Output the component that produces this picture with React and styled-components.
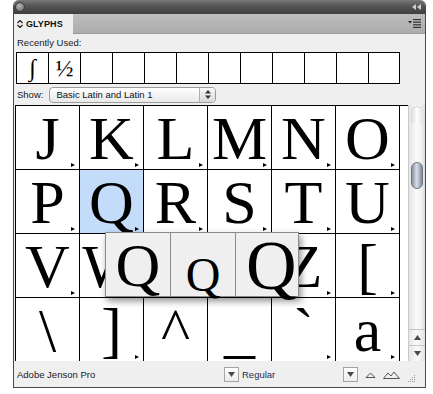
import React from "react";
import styled, { createGlobalStyle, css } from "styled-components";

const Global = createGlobalStyle`
  html, body { margin: 0; padding: 0; background: #ffffff; }
  body { font-family: "Liberation Sans", Arial, sans-serif; }
`;

const Page = styled.div`
  width: 433px;
  height: 394px;
  padding-left: 13px;
  box-sizing: border-box;
  background: #fff;
`;

const Panel = styled.div`
  width: 413px;
  height: 388px;
  box-sizing: border-box;
  border: 1px solid #4a4a4a;
  border-top: none;
  border-radius: 6px 6px 0 0;
  overflow: hidden;
  background: #efefef;
  display: flex;
  flex-direction: column;
`;

const TitleBar = styled.div`
  height: 14px;
  flex: none;
  background: linear-gradient(#7a7a7a, #565656 40%, #3e3e3e);
  display: flex;
  align-items: center;
  justify-content: space-between;
  padding: 0 4px 0 1px;
`;

const CloseDot = styled.div`
  width: 8px;
  height: 8px;
  border-radius: 50%;
  background: radial-gradient(circle at 40% 35%, #b5b5b5, #7d7d7d 70%);
  border: 1px solid #3a3a3a;
`;

const TabRow = styled.div`
  height: 20px;
  flex: none;
  display: flex;
  align-items: stretch;
  justify-content: space-between;
  background: linear-gradient(#bdbdbd, #acacac);
  border-bottom: 1px solid #9a9a9a;
  box-sizing: border-box;
`;

const Tab = styled.div`
  width: 59px;
  background: #efefef;
  margin-bottom: -1px;
  display: flex;
  align-items: center;
  padding-left: 3px;
  gap: 3px;
  box-sizing: border-box;
  font: bold 9px "Liberation Sans", Arial, sans-serif;
  color: #111;
  letter-spacing: 0.1px;
`;

const MenuBtn = styled.div`
  display: flex;
  align-items: center;
  padding-right: 4px;
`;

const Label = styled.div`
  font: 9.5px "Liberation Sans", Arial, sans-serif;
  color: #1a1a1a;
`;

const RecentLabel = styled(Label)`
  height: 18px;
  line-height: 18px;
  padding-left: 3px;
`;

const RecentRow = styled.div`
  display: flex;
  margin-left: 2px;
`;

const RecentCell = styled.div`
  width: 32px;
  height: 32px;
  box-sizing: border-box;
  border: 1px solid #000;
  border-right: none;
  background: #fff;
  display: flex;
  align-items: center;
  justify-content: center;
  font-family: "Liberation Serif", "DejaVu Serif", serif;
  font-size: ${(p) => p.$size || 22}px;
  color: #000;
  &:last-child { border-right: 1px solid #000; }
`;

const ShowRow = styled.div`
  height: 25px;
  display: flex;
  align-items: center;
  padding-left: 3px;
  gap: 6px;
`;

const Select = styled.div`
  width: 167px;
  height: 16px;
  box-sizing: border-box;
  border: 1px solid #9c9c9c;
  border-radius: 4px;
  background: linear-gradient(#ffffff, #f4f4f4 50%, #e9e9e9);
  display: flex;
  align-items: center;
  justify-content: space-between;
  padding-left: 6px;
  font: 9.5px "Liberation Sans", Arial, sans-serif;
  color: #111;
  overflow: hidden;
`;

const Stepper = styled.div`
  width: 15px;
  height: 14px;
  border-left: 1px solid #b0b0b0;
  background: linear-gradient(#f8f8f8, #d8d8d8);
  display: flex;
  align-items: center;
  justify-content: center;
`;

const GridArea = styled.div`
  position: relative;
  margin-left: 1px;
  height: 256px;
  display: flex;
  flex: none;
`;

const Grid = styled.div`
  width: 393px;
  height: 256px;
  box-sizing: border-box;
  border-top: 1px solid #000;
  border-left: 1px solid #000;
  background: #fff;
  display: grid;
  grid-template-columns: repeat(6, 64px);
  grid-auto-rows: 64px;
  overflow: hidden;
`;

const Cell = styled.div`
  position: relative;
  box-sizing: border-box;
  border-right: 1px solid #000;
  border-bottom: 1px solid #000;
  background: ${(p) => (p.$selected ? "#c3dcfa" : "#fff")};
  text-align: center;
  font-family: "Liberation Serif", "DejaVu Serif", serif;
  font-size: 62px;
  line-height: 64px;
  color: #000;
  overflow: hidden;
  ${(p) =>
    p.$mark &&
    css`
      &::after {
        content: "";
        position: absolute;
        right: 4px;
        bottom: 2px;
        border-left: 4px solid #000;
        border-top: 2.5px solid transparent;
        border-bottom: 2.5px solid transparent;
      }
    `}
`;

const Popup = styled.div`
  position: absolute;
  left: 90px;
  top: 127px;
  height: 65px;
  display: flex;
  background: #efefef;
  border: 1px solid #8a8a8a;
  box-sizing: border-box;
  box-shadow: 2px 4px 7px rgba(0, 0, 0, 0.45);
`;

const PopCell = styled.div`
  width: ${(p) => p.$w}px;
  height: 63px;
  box-sizing: border-box;
  border-right: ${(p) => (p.$last ? "none" : "1px solid #8a8a8a")};
  text-align: ${(p) => (p.$last ? "left" : "center")};
  padding-left: ${(p) => (p.$last ? 10 : 0)}px;
  font-family: "Liberation Serif", "DejaVu Serif", serif;
  font-size: ${(p) => p.$size}px;
  line-height: ${(p) => p.$lh}px;
  color: #000;
  overflow: visible;
  white-space: nowrap;
`;

const Scrollbar = styled.div`
  width: 17px;
  height: 256px;
  box-sizing: border-box;
  border-left: 1px solid #c9c9c9;
  background: linear-gradient(90deg, #e4e4e4, #fafafa 45%, #f2f2f2 75%, #dcdcdc);
  display: flex;
  flex-direction: column;
`;

const TrackCap = styled.div`
  height: 16px;
  margin: 1px 2px 0;
  border-radius: 7px 7px 0 0;
  background: linear-gradient(90deg, #d8d8d8, #ffffff 50%, #e0e0e0);
  border-top: 1px solid #cfcfcf;
`;

const Thumb = styled.div`
  margin: 39px 2px 0;
  height: 25px;
  border-radius: 7px;
  border: 1px solid #6f7680;
  background: linear-gradient(90deg, #8892a0, #d4dbe6 45%, #b4bfcc 70%, #7c8693);
`;

const Spacer = styled.div`
  flex: 1;
`;

const ArrowBtn = styled.div`
  height: 15px;
  border-top: 1px solid #c4c4c4;
  display: flex;
  align-items: center;
  justify-content: center;
  background: linear-gradient(90deg, #e6e6e6, #fbfbfb 50%, #e2e2e2);
`;

const BottomBar = styled.div`
  flex: 1;
  display: flex;
  align-items: center;
  padding-left: 3px;
  background: #efefef;
`;

const FontName = styled(Label)`
  width: 207px;
`;

const DropBtn = styled.div`
  width: 15px;
  height: 15px;
  box-sizing: border-box;
  border: 1px solid #a5a5a5;
  background: linear-gradient(#ffffff, #ececec);
  display: flex;
  align-items: center;
  justify-content: center;
`;

const StyleName = styled(Label)`
  width: 104px;
  padding-left: 3px;
  box-sizing: border-box;
  color: #1d2a55;
`;

const IconGroup = styled.div`
  display: flex;
  align-items: center;
  gap: 7px;
  margin-left: 7px;
  margin-top: 2px;
`;

const Grip = styled.div`
  margin-left: 7px;
  margin-top: 8px;
`;

const Tri = ({ up }) => (
  <svg width="7" height="5" viewBox="0 0 7 5">
    <path d={up ? "M3.5 0 L7 5 L0 5Z" : "M0 0 L7 0 L3.5 5Z"} fill="#4a4a4a" />
  </svg>
);

const rows = [
  [["J", 1], ["K", 1], ["L", 1], ["M", 1], ["N", 1], ["O", 1]],
  [["P", 1], ["Q", 1, 1], ["R", 1], ["S", 1], ["T", 1], ["U", 1]],
  [["V", 1], ["W", 1], ["X", 1], ["Y", 1], ["Z", 1], ["[", 1]],
  [["\\", 0], ["]", 1], ["^", 0], ["_", 0], ["`", 1], ["a", 1]],
];

export default function App() {
  return (
    <>
      <Global />
      <Page>
        <Panel>
          <TitleBar>
            <CloseDot />
            <svg width="9" height="6" viewBox="0 0 9 6">
              <path d="M4 0 L0 3 L4 6Z M9 0 L5 3 L9 6Z" fill="#cfcfcf" />
            </svg>
          </TitleBar>
          <TabRow>
            <Tab>
              <svg width="6" height="8" viewBox="0 0 6 8">
                <path d="M0.5 3 L3 0.5 L5.5 3 M0.5 5 L3 7.5 L5.5 5" stroke="#222" strokeWidth="1.2" fill="none" />
              </svg>
              GLYPHS
            </Tab>
            <MenuBtn>
              <svg width="13" height="9" viewBox="0 0 13 9">
                <path d="M0 2 L4 2 L2 4.5Z" fill="#222" />
                <rect x="5" y="0" width="8" height="1.2" fill="#333" />
                <rect x="5" y="2.6" width="8" height="1.2" fill="#333" />
                <rect x="5" y="5.2" width="8" height="1.2" fill="#333" />
                <rect x="5" y="7.8" width="8" height="1.2" fill="#333" />
              </svg>
            </MenuBtn>
          </TabRow>
          <RecentLabel>Recently Used:</RecentLabel>
          <RecentRow>
            <RecentCell $size={24}>∫</RecentCell>
            <RecentCell $size={24}>½</RecentCell>
            {Array.from({ length: 10 }).map((_, i) => (
              <RecentCell key={i} />
            ))}
          </RecentRow>
          <ShowRow>
            <Label>Show:</Label>
            <Select>
              Basic Latin and Latin 1
              <Stepper>
                <svg width="6" height="9" viewBox="0 0 6 9">
                  <path d="M3 0 L6 3.5 L0 3.5Z M0 5.5 L6 5.5 L3 9Z" fill="#333" />
                </svg>
              </Stepper>
            </Select>
          </ShowRow>
          <GridArea>
            <Grid>
              {rows.flat().map(([g, m, s], i) => (
                <Cell key={i} $mark={!!m} $selected={!!s}>
                  {g}
                </Cell>
              ))}
            </Grid>
            <Scrollbar>
              <TrackCap />
              <Thumb />
              <Spacer />
              <ArrowBtn>
                <Tri up />
              </ArrowBtn>
              <ArrowBtn>
                <Tri />
              </ArrowBtn>
            </Scrollbar>
            <Popup>
              <PopCell $w={65} $size={62} $lh={64}>Q</PopCell>
              <PopCell $w={65} $size={48} $lh={84}>Q</PopCell>
              <PopCell $w={62} $size={70} $lh={65} $last>Q</PopCell>
            </Popup>
          </GridArea>
          <BottomBar>
            <FontName>Adobe Jenson Pro</FontName>
            <DropBtn>
              <Tri />
            </DropBtn>
            <StyleName>Regular</StyleName>
            <DropBtn>
              <Tri />
            </DropBtn>
            <IconGroup>
              <svg width="11" height="6" viewBox="0 0 11 6">
                <path d="M1 5.5 L5.5 1 L10 5.5Z" fill="none" stroke="#555" strokeWidth="1" />
              </svg>
              <svg width="17" height="8" viewBox="0 0 17 8">
                <path d="M0.5 7.5 L5 2 L8 5 L11 1 L16.5 7.5Z" fill="none" stroke="#555" strokeWidth="1" />
              </svg>
            </IconGroup>
            <Grip>
              <svg width="9" height="9" viewBox="0 0 9 9">
                {[
                  [7, 1], [7, 3], [5, 3], [7, 5], [5, 5], [3, 5], [7, 7], [5, 7], [3, 7], [1, 7],
                ].map(([x, y], i) => (
                  <rect key={i} x={x} y={y} width="1" height="1" fill="#9a9a9a" />
                ))}
              </svg>
            </Grip>
          </BottomBar>
        </Panel>
      </Page>
    </>
  );
}
